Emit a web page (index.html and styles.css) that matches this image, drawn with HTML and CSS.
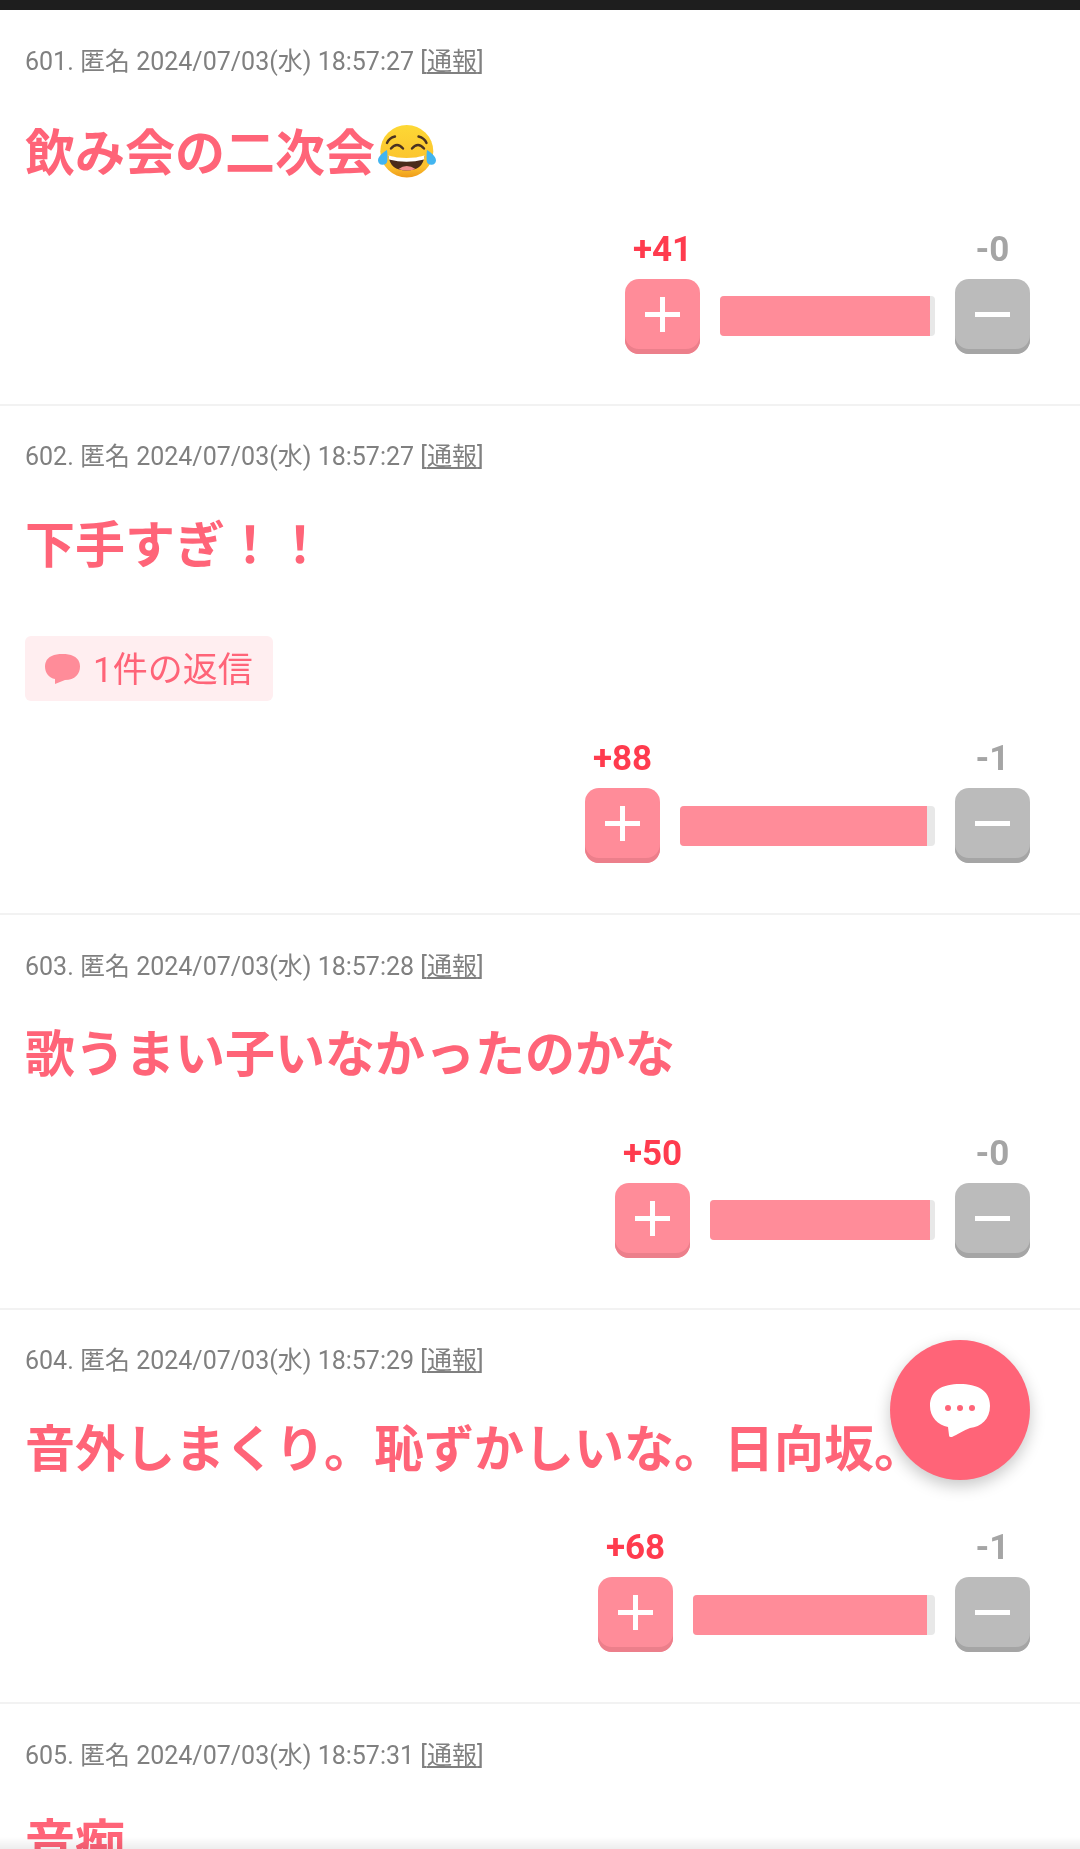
FILE: index.html
```html
<!DOCTYPE html>
<html lang="ja">
<head>
  <meta charset="utf-8">
  <title>コメント</title>
  <link rel="stylesheet" href="styles.css">
</head>
<body>

  <div class="topbar"></div>

  <div class="comment">
    <div class="meta">601. 匿名 2024/07/03(水) 18:57:27 [<a href="#">通報</a>]</div>
    <div class="text text-emoji">飲み会の二次会<svg class="emoji" viewBox="0 0 58 53"><defs><linearGradient id="face" x1="0" y1="0" x2="0" y2="1"><stop offset="0" stop-color="#fdd835"/><stop offset=".8" stop-color="#fbc02d"/><stop offset="1" stop-color="#ef9a1a"/></linearGradient></defs><ellipse cx="28.800" cy="26.300" rx="26.500" ry="26.200" fill="url(#face)"/><path d="M9 18q2-5 8-6.500M40.500 11.500q6 1.500 8 6.500M13 23.500q6-7 12 0M34 23.500q6-7 12 0" fill="none" stroke="#4a3222" stroke-width="2.400" stroke-linecap="round"/><path d="M10.500 31q18 5 36 0q-1.500 14.500-18 14.500t-18-14.500z" fill="#4a2b1a"/><path d="M10.500 30.500q18 5 36 0l-.5 4q-17.500 4.500-35 0z" fill="#fff"/><path d="M20.500 44q8-6 17 0q-4 1.500-8.500 1.500t-8.500-1.500z" fill="#ef8f8f"/><path d="M9 25C6 27 0 31 0 35.500a4.700 4.700 0 0 0 9.300.5C9.500 32 9.500 28 9 25zM49 25c3 2 9 6 9 10.500a4.700 4.700 0 0 1-9.300.5C48.500 32 48.500 28 49 25z" fill="#42b5f0"/></svg></div>
    <div class="votes">
      <div class="vote">
        <span class="count plus">+41</span>
        <button class="btn btn-plus"><svg viewBox="0 0 35 35"><rect x="15" width="5" height="35"/><rect y="15" width="35" height="5"/></svg></button>
      </div>
      <div class="track" style="width:215px"><div class="fill" style="width:210px"></div></div>
      <div class="vote">
        <span class="count minus">-0</span>
        <button class="btn btn-minus"><svg viewBox="0 0 35 35"><rect y="15" width="35" height="5"/></svg></button>
      </div>
    </div>
  </div>

  <div class="comment comment-shift">
    <div class="meta">602. 匿名 2024/07/03(水) 18:57:27 [<a href="#">通報</a>]</div>
    <div class="text">下手すぎ！！</div>
    <a class="reply" href="#">
      <svg viewBox="0 0 35 30"><path d="M17.500 0C7 0 0 4 0 12.500 0 19 4 24 10 25v5l10-4c10 0 15-6 15-13.500C35 4 28 0 17.500 0z"/></svg>
      <span class="reply-label">1件の返信</span>
    </a>
    <div class="votes">
      <div class="vote">
        <span class="count plus">+88</span>
        <button class="btn btn-plus"><svg viewBox="0 0 35 35"><rect x="15" width="5" height="35"/><rect y="15" width="35" height="5"/></svg></button>
      </div>
      <div class="track" style="width:255px"><div class="fill" style="width:247px"></div></div>
      <div class="vote">
        <span class="count minus">-1</span>
        <button class="btn btn-minus"><svg viewBox="0 0 35 35"><rect y="15" width="35" height="5"/></svg></button>
      </div>
    </div>
  </div>

  <div class="comment">
    <div class="meta">603. 匿名 2024/07/03(水) 18:57:28 [<a href="#">通報</a>]</div>
    <div class="text">歌うまい子いなかったのかな</div>
    <div class="votes">
      <div class="vote">
        <span class="count plus">+50</span>
        <button class="btn btn-plus"><svg viewBox="0 0 35 35"><rect x="15" width="5" height="35"/><rect y="15" width="35" height="5"/></svg></button>
      </div>
      <div class="track" style="width:225px"><div class="fill" style="width:220px"></div></div>
      <div class="vote">
        <span class="count minus">-0</span>
        <button class="btn btn-minus"><svg viewBox="0 0 35 35"><rect y="15" width="35" height="5"/></svg></button>
      </div>
    </div>
  </div>

  <div class="comment comment-shift comment-tight">
    <div class="meta">604. 匿名 2024/07/03(水) 18:57:29 [<a href="#">通報</a>]</div>
    <div class="text">音外しまくり。恥ずかしいな。日向坂。</div>
    <div class="votes">
      <div class="vote">
        <span class="count plus">+68</span>
        <button class="btn btn-plus"><svg viewBox="0 0 35 35"><rect x="15" width="5" height="35"/><rect y="15" width="35" height="5"/></svg></button>
      </div>
      <div class="track" style="width:242px"><div class="fill" style="width:234px"></div></div>
      <div class="vote">
        <span class="count minus">-1</span>
        <button class="btn btn-minus"><svg viewBox="0 0 35 35"><rect y="15" width="35" height="5"/></svg></button>
      </div>
    </div>
  </div>

  <div class="comment">
    <div class="meta">605. 匿名 2024/07/03(水) 18:57:31 [<a href="#">通報</a>]</div>
    <div class="text">音痴</div>
  </div>

  <button class="fab">
    <svg viewBox="0 0 60 53"><path d="M30 0C13 0 0 6 0 22c0 11 8 19 18 21l1 8c0 2 1 2 3 2 5-2 12-7 18-9 11-1 20-9 20-22C60 6 47 0 30 0z" fill="#fff"/><circle cx="18" cy="24" r="3" fill="#ff6478"/><circle cx="30" cy="24" r="3" fill="#ff6478"/><circle cx="42" cy="24" r="3" fill="#ff6478"/></svg>
  </button>

  <div class="bottom-fade"></div>

</body>
</html>
```

FILE: styles.css
```css
html, body {
  height: 100%;
  overflow: hidden;
}

body {
  margin: 0;
  background: #fff;
  font-family: Roboto, "Noto Sans CJK JP", sans-serif;
}

.topbar {
  height: 10px;
  background: #1e1e1e;
}

.comment {
  padding: 36px 50px 50px 25px;
  border-bottom: 2px solid #f2f2f2;
  will-change: transform;
}

.comment-shift {
  padding-top: 35px;
}

.comment-shift .text {
  margin-top: 32px;
}

.comment-shift .track {
  margin-bottom: 17px;
}

.comment-tight {
  padding-bottom: 50px;
}

.comment-tight .text {
  margin-bottom: 46px;
}

.meta {
  font-size: 25px;
  line-height: 32px;
  color: #808080;
}

.meta a {
  color: #808080;
}

.text {
  display: flex;
  align-items: center;
  height: 72px;
  margin: 31px 0 47px;
  font-size: 50px;
  font-weight: 700;
  color: #ff6478;
}

.text-emoji {
  margin: 35px 0 44px;
}

.emoji {
  width: 58px;
  height: 53px;
  margin: 5px 0 0 3px;
}

.reply {
  display: inline-flex;
  align-items: center;
  gap: 13px;
  height: 65px;
  margin: 12px 0 37px;
  padding: 0 20px;
  border-radius: 6px;
  background: #ffeef0;
  font-size: 35px;
  color: #ff6478;
  text-decoration: none;
}

.reply svg {
  width: 35px;
  height: 30px;
  fill: #ff8c99;
}

.reply-label {
  margin-top: -5px;
}

.votes {
  display: flex;
  justify-content: flex-end;
  align-items: flex-end;
  gap: 20px;
}

.vote {
  display: flex;
  flex-direction: column;
  align-items: center;
  gap: 10px;
}

.count {
  margin-top: 2px;
  font-size: 35px;
  line-height: 38px;
  font-weight: 700;
}

.count.plus {
  color: #ff3b4e;
}

.count.minus {
  color: #a5a5a5;
}

.btn {
  display: flex;
  align-items: center;
  justify-content: center;
  width: 75px;
  height: 75px;
  padding: 0 0 5px;
  border: none;
  border-radius: 14px;
}

.btn svg {
  width: 35px;
  height: 35px;
  fill: #fff;
}

.btn-plus {
  background: #ff8c99;
  box-shadow: inset 0 -5px 0 #ec7f8b;
}

.btn-minus {
  background: #bbb;
  box-shadow: inset 0 -5px 0 #a5a5a5;
}

.track {
  height: 40px;
  margin-bottom: 18px;
  border-radius: 4px;
  background: #e8e8e8;
  overflow: hidden;
}

.fill {
  height: 100%;
  background: #ff8c99;
}

.fab {
  position: fixed;
  left: 890px;
  top: 1340px;
  z-index: 2;
  display: flex;
  align-items: center;
  justify-content: center;
  width: 140px;
  height: 140px;
  padding: 0;
  border: none;
  border-radius: 50%;
  background: #ff6478;
  box-shadow: 0 6px 16px rgba(0, 0, 0, 0.22);
}

.fab svg {
  width: 60px;
  height: 53px;
}

.bottom-fade {
  position: fixed;
  left: 0;
  right: 0;
  bottom: 0;
  z-index: 2;
  height: 12px;
  background: linear-gradient(rgba(0, 0, 0, 0), rgba(0, 0, 0, 0.07));
}
```
